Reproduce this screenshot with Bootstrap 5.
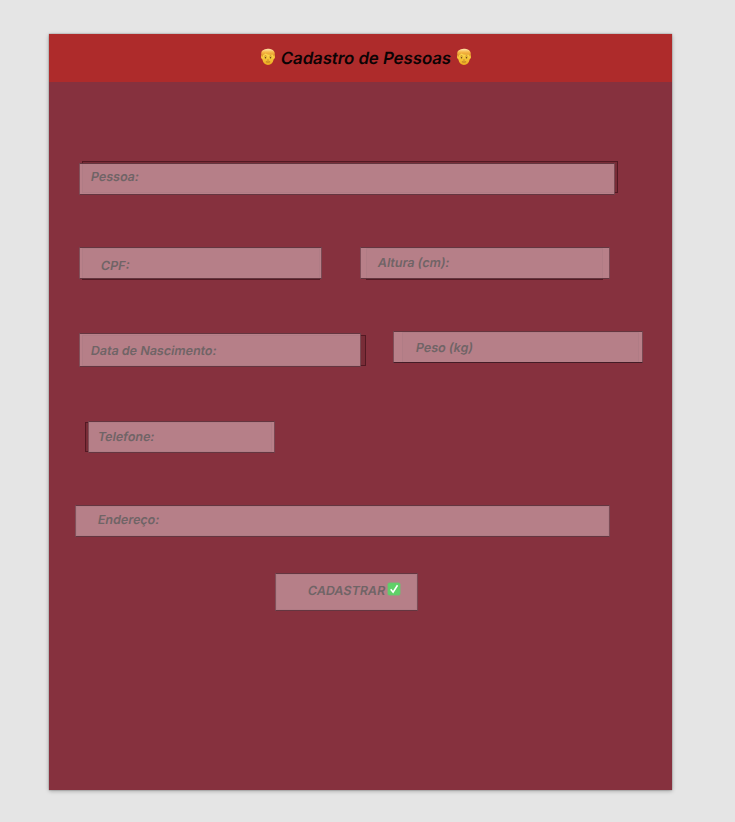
<!DOCTYPE html>
<html lang="pt-BR">
<head>
<meta charset="utf-8">
<meta name="viewport" content="width=device-width, initial-scale=1">
<title>Cadastro de Pessoas</title>
<link href="https://cdn.jsdelivr.net/npm/bootstrap@5.3.0/dist/css/bootstrap.min.css" rel="stylesheet">
<style>
body{background:#e5e5e5;font-family:Inter,"Liberation Sans",sans-serif;font-optical-sizing:none;padding:34px 0 32px 49px;height:822px;overflow:hidden}
.panel{width:623px;height:756px;background:#86313e;box-shadow:0 1px 4px rgba(0,0,0,.3),0 0 1px rgba(0,0,0,.5)}
.panel-head{height:48px;background:#ae2b2b;gap:5px;padding:0 0 1px 11px}
.panel-head svg{margin-top:-2px}
.panel-head h1{font-size:16.8px;line-height:20px;letter-spacing:-.03px;color:#0b0304;font-weight:600;width:170px;white-space:nowrap}
.slanted{display:inline-block;transform:skewX(-10deg)}
.form-line{isolation:isolate}
.line-name{padding:81px 0 0 30px}
.line-cpf{padding:52px 0 0 30px;gap:38px}
.line-birth{padding:54px 0 0 30px;gap:32px}
.line-phone{padding:54px 0 0 39px}
.line-address{padding:52px 0 0 26px}
.line-send{padding:36px 0 0 226px}
.field{height:32px;background:rgba(193,142,151,.85);border:1px solid rgba(50,10,20,.62);border-left-color:rgba(50,10,20,.4);border-right-color:rgba(50,10,20,.45);background-clip:border-box;font-size:12.5px;line-height:16px;font-weight:600;color:#706466;border-radius:0;padding:0 0 0 11px;white-space:nowrap}
.field::before{content:"";position:absolute;z-index:-1;top:var(--t,0);right:var(--r,0);bottom:var(--b,0);left:var(--l,0);border:1px solid rgba(45,5,15,.5);background:rgba(0,0,0,.1)}
.f-name{width:536px;--t:-3px;--r:-4px;--b:1px;--l:2px;padding-bottom:5px}
.f-cpf{width:243px;--r:1px;--b:-2px;--l:2px;--t:0px;padding:5px 0 0 21px}
.f-height{width:250px;--r:6px;--b:-2px;--l:5px;padding-left:17px;padding-bottom:0}
.f-birth{width:282px;height:34px;--t:1px;--r:-6px;--l:2px;padding-left:11px;padding-top:1px}
.f-weight{width:250px;margin-top:-2px;border-bottom-color:rgba(40,5,15,.8);--r:3px;--b:-1px;--l:8px;padding:2px 0 0 22px}
.f-phone{width:187px;--l:-4px;--r:2px;padding-left:9px}
.f-address{width:535px;padding-left:22px;padding-bottom:3px}
.f-send{width:143px;height:38px;padding:0 0 3px 32px}
.f-send svg{margin:-4px 0 0 2px}
</style>
</head>
<body>
<main class="panel">
<header class="panel-head d-flex align-items-center justify-content-center">
<svg width="16" height="18" viewBox="0 0 16 18" aria-hidden="true"><defs><linearGradient id="skin" x2="0" y2="1"><stop stop-color="#ffdc50"/><stop offset="1" stop-color="#eba91f"/></linearGradient><linearGradient id="hair" x2="0" y2="1"><stop stop-color="#ffe7ad"/><stop offset=".4" stop-color="#f7b947"/><stop offset="1" stop-color="#d98a20"/></linearGradient><symbol id="person" viewBox="0 0 16 18"><path d="M2 7Q.7 7 1 9.3Q1.2 11 2.3 11.2Q3.5 16.8 8 17Q12.5 16.8 13.7 11.2Q14.8 11 15 9.3Q15.3 7 14 7V5H2z" fill="url(#skin)"/><path d="M1.8 9Q.3 4.5 2.5 2.6Q5.2.3 9 .8Q13.8 1.2 14.7 4.8Q15.1 6.8 14.2 9L13.3 7.6L12.7 6.4Q8.5 7.2 5.3 5.4Q4.5 6.5 3.2 7L2.8 8.2z" fill="url(#hair)"/><circle cx="5.5" cy="9.8" r=".8" fill="#694019"/><circle cx="10.5" cy="9.8" r=".8" fill="#694019"/><path d="M4.5 8.2q1-.6 2 0M9.5 8.2q1-.6 2 0M5.9 13.8q2.1.6 4.2 0M7.4 12q.6.4 1.2 0" fill="none" stroke="#a86420" stroke-width=".8"/></symbol></defs><use href="#person"/></svg>
<h1 class="m-0"><span class="slanted">Cadastro de Pessoas</span></h1>
<svg width="16" height="18" viewBox="0 0 16 18" aria-hidden="true"><use href="#person"/></svg>
</header>
<form>
<div class="form-line line-name d-flex"><div class="field f-name position-relative d-flex align-items-center"><span class="slanted">Pessoa:</span></div></div>
<div class="form-line line-cpf d-flex"><div class="field f-cpf position-relative d-flex align-items-center"><span class="slanted">CPF:</span></div><div class="field f-height position-relative d-flex align-items-center"><span class="slanted">Altura (cm):</span></div></div>
<div class="form-line line-birth d-flex"><div class="field f-birth position-relative d-flex align-items-center"><span class="slanted">Data de Nascimento:</span></div><div class="field f-weight position-relative d-flex align-items-center"><span class="slanted">Peso (kg)</span></div></div>
<div class="form-line line-phone d-flex"><div class="field f-phone position-relative d-flex align-items-center"><span class="slanted">Telefone:</span></div></div>
<div class="form-line line-address d-flex"><div class="field f-address position-relative d-flex align-items-center"><span class="slanted">Endereço:</span></div></div>
<div class="form-line line-send d-flex"><button type="button" class="field f-send position-relative d-flex align-items-center"><span class="slanted">CADASTRAR</span><svg width="14" height="14" viewBox="0 0 14 14" aria-hidden="true"><rect x=".8" y=".8" width="12.4" height="12.4" rx="1.5" fill="#5fd068" stroke="#79b778" stroke-width=".5"/><path d="M3.7 7.2L6.1 10.2L10.5 3.3" fill="none" stroke="#fff" stroke-width="1.6"/></svg></button></div>
</form>
</main>
<script src="https://cdn.jsdelivr.net/npm/bootstrap@5.3.0/dist/js/bootstrap.bundle.min.js"></script>
</body>
</html>
